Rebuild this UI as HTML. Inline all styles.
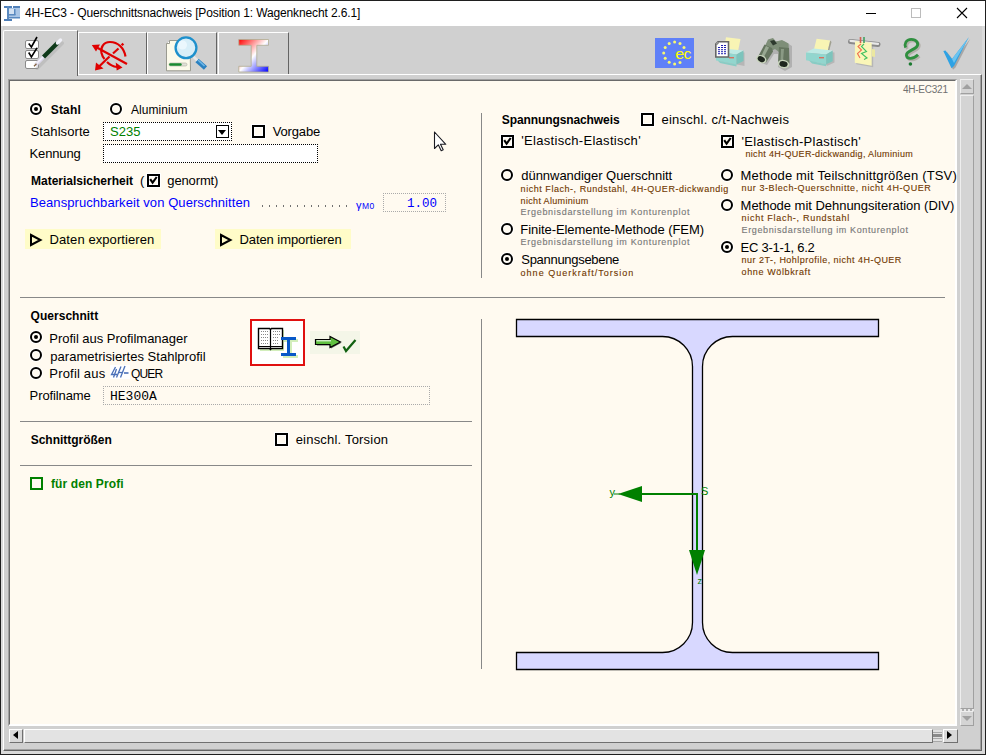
<!DOCTYPE html>
<html><head><meta charset="utf-8">
<style>
*{margin:0;padding:0;box-sizing:border-box}
html,body{width:986px;height:755px;overflow:hidden;background:#d0d0d0;font-family:"Liberation Sans",sans-serif;color:#000}
.a{position:absolute}
.t{position:absolute;white-space:nowrap;line-height:1}
.f13{font-size:13px}
.f12{font-size:12px}
.f10{font-size:10px}
.b{font-weight:bold}
.rad{position:absolute;width:12px;height:12px;border:2px solid #000;border-radius:50%;box-shadow:0 0 0 1px #fff,inset 0 0 0 1px #fff}
.rad.on::after{content:"";position:absolute;left:2px;top:2px;width:4px;height:4px;background:#000;border-radius:50%}
.chk{position:absolute;width:13px;height:13px;border:2px solid #000;box-shadow:0 0 0 1px #fff,inset 0 0 0 1px #fff}
.brn{color:#8a4a00}
.gry{color:#888}
</style></head><body>
<!-- window frame -->
<div class="a" style="left:0;top:0;width:986px;height:26px;background:#fff"></div>
<div class="a" style="left:0;top:0;width:986px;height:1px;background:#1f1f1f"></div>
<div class="a" style="left:0;top:0;width:1px;height:755px;background:#1f1f1f"></div>
<div class="a" style="left:985px;top:0;width:1px;height:755px;background:#1f1f1f"></div>
<div class="a" style="left:0;top:754px;width:986px;height:1px;background:#1f1f1f"></div>
<!-- title -->
<div class="t f12" style="left:25px;top:7px;letter-spacing:-0.13px;color:#000">4H-EC3 - Querschnittsnachweis [Position 1: Wagenknecht 2.6.1]</div>
<!-- outer light band -->
<div class="a" style="left:1px;top:26px;width:2px;height:728px;background:#dadada"></div>
<div class="a" style="left:982px;top:26px;width:3px;height:728px;background:#dadada"></div>
<div class="a" style="left:1px;top:751px;width:984px;height:3px;background:#dadada"></div>
<!-- tab panel frame -->
<div class="a" style="left:3px;top:74px;width:979px;height:677px;border-left:1px solid #fff;border-top:1px solid #fff;border-right:1px solid #646464;border-bottom:1px solid #646464"></div>
<div class="a" style="left:980px;top:75px;width:1px;height:675px;background:#a0a0a0"></div>
<div class="a" style="left:4px;top:749px;width:977px;height:1px;background:#a0a0a0"></div>
<!-- tabs -->
<div class="a" style="left:78px;top:32px;width:69px;height:43px;background:#d0d0d0;border-top:1px solid #fff;border-left:1px solid #fff;border-right:1px solid #646464"></div>
<div class="a" style="left:147px;top:32px;width:70px;height:43px;background:#d0d0d0;border-top:1px solid #fff;border-left:1px solid #fff;border-right:1px solid #646464"></div>
<div class="a" style="left:218px;top:32px;width:71px;height:43px;background:#d0d0d0;border-top:1px solid #fff;border-left:1px solid #fff;border-right:1px solid #646464"></div>
<div class="a" style="left:78px;top:74px;width:211px;height:1px;background:#fff"></div>
<!-- active tab -->
<div class="a" style="left:3px;top:30px;width:75px;height:46px;background:#d0d0d0;border-top:1px solid #fff;border-left:1px solid #fff;border-right:1px solid #646464;border-top-left-radius:2px"></div>
<!-- cream panel -->
<div class="a" style="left:8px;top:79px;width:949px;height:647px;background:#fffaf0;border-left:2px solid #6a6a6a;border-top:2px solid #6a6a6a;border-right:2px solid #fff;border-bottom:2px solid #fff"></div>
<div class="a" style="left:8px;top:79px;width:1px;height:646px;background:#a0a0a0"></div>
<div class="a" style="left:8px;top:79px;width:948px;height:1px;background:#a0a0a0"></div>
<!-- v scroll -->
<div class="a" style="left:960px;top:79px;width:14px;height:15px;background:#d4d4d4;border-left:1px solid #eee;border-top:1px solid #eee;border-right:1px solid #a0a0a0;border-bottom:1px solid #a0a0a0"></div>
<div class="a" style="left:962px;top:84px;width:0;height:0;border-left:5px solid transparent;border-right:5px solid transparent;border-bottom:5px solid #a0a0a0"></div>
<div class="a" style="left:960px;top:95px;width:14px;height:614px;background:#d4d4d4;border-left:1px solid #eee;border-top:1px solid #eee;border-right:1px solid #a0a0a0;border-bottom:1px solid #a0a0a0"></div>
<div class="a" style="left:960px;top:709px;width:14px;height:2px;background:repeating-linear-gradient(90deg,#e8e8e8 0 2px,#b0b0b0 2px 4px)"></div>
<div class="a" style="left:960px;top:711px;width:14px;height:15px;background:#d4d4d4;border-left:1px solid #eee;border-top:1px solid #eee;border-right:1px solid #a0a0a0;border-bottom:1px solid #a0a0a0"></div>
<div class="a" style="left:962px;top:716px;width:0;height:0;border-left:5px solid transparent;border-right:5px solid transparent;border-top:5px solid #a0a0a0"></div>
<!-- h scroll -->
<div class="a" style="left:9px;top:729px;width:14px;height:14px;background:#d8d8d8;border-left:1px solid #fff;border-top:1px solid #fff;border-right:1px solid #707070;border-bottom:1px solid #707070"></div>
<div class="a" style="left:13px;top:731px;width:0;height:0;border-top:4.5px solid transparent;border-bottom:4.5px solid transparent;border-right:5px solid #000"></div>
<div class="a" style="left:24px;top:729px;width:909px;height:14px;background:#e3e3e3;border-left:1px solid #fff;border-top:1px solid #fff;border-right:1px solid #707070;border-bottom:1px solid #707070"></div>
<div class="a" style="left:933px;top:730px;width:9px;height:12px;background:repeating-linear-gradient(180deg,#e0e0e0 0 2px,#a8a8a8 2px 3px)"></div>
<div class="a" style="left:933px;top:734px;width:9px;height:3px;background:#8a8a8a"></div>
<div class="a" style="left:943px;top:729px;width:15px;height:14px;background:#d8d8d8;border-left:1px solid #fff;border-top:1px solid #fff;border-right:1px solid #707070;border-bottom:1px solid #707070"></div>
<div class="a" style="left:947px;top:731px;width:0;height:0;border-top:4.5px solid transparent;border-bottom:4.5px solid transparent;border-left:5px solid #000"></div>
<!-- left top form controls -->
<div class="rad on" style="left:30px;top:103px"></div>
<div class="rad" style="left:110px;top:103px"></div>
<div class="a" style="left:103px;top:122px;width:129px;height:19px;background:#fff;border:1px dotted #000"></div>
<div class="t f13" style="left:110px;top:125px;color:#008000">S235</div>
<div class="a" style="left:216px;top:125px;width:13px;height:13px;border:1px solid #000;background:#fff"></div>
<div class="a" style="left:218px;top:130px;width:0;height:0;border-left:4.5px solid transparent;border-right:4.5px solid transparent;border-top:5px solid #000"></div>
<div class="chk" style="left:252px;top:125px"></div>
<div class="a" style="left:103px;top:144px;width:215px;height:19px;background:#fff;border:1px dotted #000"></div>
<div class="t f13" style="left:140px;top:174px">(</div>
<div class="chk" style="left:147px;top:174px"></div>
<svg class="a" style="left:147px;top:174px" width="13" height="13"><path d="M3.2 5.2 L5.6 8.6 L9.7 3" stroke="#000" stroke-width="2.1" fill="none"/></svg>
<div class="a" style="left:262px;top:205px;width:85px;height:2px;background:repeating-linear-gradient(90deg,#707070 0 1px,transparent 1px 7px)"></div>
<div class="t" style="left:356px;top:200px;font-size:11px;color:#0000ff">&#947;</div><div class="t" style="left:362px;top:202px;font-size:8.5px;color:#0000ff;letter-spacing:.3px">M0</div>
<div class="a" style="left:383px;top:193px;width:63px;height:19px;border:1px dotted #aaa"></div>
<div class="t" style="left:407px;top:198px;font-size:12.5px;font-family:'Liberation Mono',monospace;color:#0000ff">1.00</div>
<div class="a" style="left:25px;top:229px;width:136px;height:20px;background:#fffcc8"></div>
<svg class="a" style="left:29px;top:233px" width="14" height="14"><path d="M2 2 L11.5 7 L2 12 Z" stroke="#000" stroke-width="2" fill="none"/></svg>
<div class="a" style="left:215px;top:229px;width:136px;height:20px;background:#fffcc8"></div>
<svg class="a" style="left:219px;top:233px" width="14" height="14"><path d="M2 2 L11.5 7 L2 12 Z" stroke="#000" stroke-width="2" fill="none"/></svg>
<!-- right top controls -->
<div class="a" style="left:481px;top:113px;width:1px;height:165px;background:#888"></div>
<div class="a" style="left:903px;top:85px;font-size:10px;letter-spacing:-.25px;color:#707070;line-height:1;white-space:nowrap">4H-EC321</div>
<div class="chk" style="left:641px;top:113px"></div>
<div class="chk" style="left:501px;top:135px"></div>
<svg class="a" style="left:501px;top:135px" width="13" height="13"><path d="M3.2 5.2 L5.6 8.6 L9.7 3" stroke="#000" stroke-width="2.1" fill="none"/></svg>
<div class="chk" style="left:721px;top:135px"></div>
<svg class="a" style="left:721px;top:135px" width="13" height="13"><path d="M3.2 5.2 L5.6 8.6 L9.7 3" stroke="#000" stroke-width="2.1" fill="none"/></svg>
<div class="rad" style="left:501px;top:169px"></div>
<div class="rad" style="left:501px;top:223px"></div>
<div class="rad on" style="left:501px;top:253px"></div>
<div class="rad" style="left:721px;top:169px"></div>
<div class="rad" style="left:721px;top:199px"></div>
<div class="rad on" style="left:721px;top:241px"></div>
<!-- separators -->
<div class="a" style="left:20px;top:297px;width:925px;height:1px;background:#888"></div>
<div class="a" style="left:20px;top:421px;width:452px;height:1px;background:#888"></div>
<div class="a" style="left:20px;top:465px;width:452px;height:1px;background:#888"></div>
<div class="a" style="left:481px;top:319px;width:1px;height:350px;background:#888"></div>
<!-- lower left controls -->
<div class="rad on" style="left:30px;top:331px"></div>
<div class="rad" style="left:30px;top:349px"></div>
<div class="rad" style="left:30px;top:367px"></div>
<div class="a" style="left:103px;top:386px;width:327px;height:19px;border:1px dotted #aaa"></div>
<div class="t f13" style="left:110px;top:390px;font-family:'Liberation Mono',monospace">HE300A</div>
<div class="chk" style="left:275px;top:433px"></div>
<div class="a" style="left:30px;top:477px;width:13px;height:13px;border:2px solid #008000"></div>
<div class="t" style="left:50.7px;top:104px;font-size:12px;font-weight:bold;letter-spacing:0.2px;">Stahl</div>
<div class="t" style="left:131.0px;top:104px;font-size:12px;letter-spacing:0.062px;">Aluminium</div>
<div class="t" style="left:30.6px;top:125px;font-size:13px;letter-spacing:0.078px;">Stahlsorte</div>
<div class="t" style="left:272.7px;top:125px;font-size:13px;letter-spacing:-0.15px;">Vorgabe</div>
<div class="t" style="left:29.6px;top:147px;font-size:13px;letter-spacing:-0.15px;">Kennung</div>
<div class="t" style="left:31.0px;top:175px;font-size:12px;font-weight:bold;">Materialsicherheit</div>
<div class="t" style="left:167.3px;top:174px;font-size:13px;letter-spacing:-0.129px;">genormt)</div>
<div class="t" style="left:30.0px;top:196px;font-size:13px;color:#0000ff;letter-spacing:0.071px;">Beanspruchbarkeit von Querschnitten</div>
<div class="t" style="left:49.6px;top:233px;font-size:13px;letter-spacing:0.081px;">Daten exportieren</div>
<div class="t" style="left:239.4px;top:233px;font-size:13px;letter-spacing:-0.063px;">Daten importieren</div>
<div class="t" style="left:501.8px;top:114px;font-size:12px;font-weight:bold;letter-spacing:-0.1px;">Spannungsnachweis</div>
<div class="t" style="left:661.4px;top:113px;font-size:13px;letter-spacing:0.27px;">einschl. c/t-Nachweis</div>
<div class="t" style="left:521.3px;top:134px;font-size:13px;letter-spacing:0.3px;">'Elastisch-Elastisch'</div>
<div class="t" style="left:521.3px;top:169px;font-size:13px;letter-spacing:-0.039px;">dünnwandiger Querschnitt</div>
<div class="t" style="left:520.6px;top:185px;font-size:9px;color:#703800;letter-spacing:0.54px;-webkit-text-stroke:.12px;">nicht Flach-, Rundstahl, 4H-QUER-dickwandig</div>
<div class="t" style="left:520.6px;top:197px;font-size:9px;color:#703800;letter-spacing:0.329px;-webkit-text-stroke:.12px;">nicht Aluminium</div>
<div class="t" style="left:520.6px;top:208px;font-size:9px;color:#787878;letter-spacing:0.697px;-webkit-text-stroke:.12px;">Ergebnisdarstellung im Konturenplot</div>
<div class="t" style="left:520.3px;top:223px;font-size:13px;letter-spacing:-0.068px;">Finite-Elemente-Methode (FEM)</div>
<div class="t" style="left:520.6px;top:238px;font-size:9px;color:#787878;letter-spacing:0.697px;-webkit-text-stroke:.12px;">Ergebnisdarstellung im Konturenplot</div>
<div class="t" style="left:521.3px;top:253px;font-size:13px;letter-spacing:-0.3px;">Spannungsebene</div>
<div class="t" style="left:520.6px;top:269px;font-size:9px;color:#703800;letter-spacing:1.01px;-webkit-text-stroke:.12px;">ohne Querkraft/Torsion</div>
<div class="t" style="left:741.6px;top:135px;font-size:13px;letter-spacing:0.285px;">'Elastisch-Plastisch'</div>
<div class="t" style="left:745.4px;top:150px;font-size:9px;color:#703800;letter-spacing:0.332px;-webkit-text-stroke:.12px;">nicht 4H-QUER-dickwandig, Aluminium</div>
<div class="t" style="left:740.6px;top:169px;font-size:13px;letter-spacing:0.159px;">Methode mit Teilschnittgrößen (TSV)</div>
<div class="t" style="left:741.6px;top:184px;font-size:9px;color:#703800;letter-spacing:0.584px;-webkit-text-stroke:.12px;">nur 3-Blech-Querschnitte, nicht 4H-QUER</div>
<div class="t" style="left:740.6px;top:199px;font-size:13px;letter-spacing:-0.026px;">Methode mit Dehnungsiteration (DIV)</div>
<div class="t" style="left:741.6px;top:214px;font-size:9px;color:#703800;letter-spacing:0.705px;-webkit-text-stroke:.12px;">nicht Flach-, Rundstahl</div>
<div class="t" style="left:741.6px;top:226px;font-size:9px;color:#787878;letter-spacing:0.626px;-webkit-text-stroke:.12px;">Ergebnisdarstellung im Konturenplot</div>
<div class="t" style="left:740.6px;top:241px;font-size:13px;letter-spacing:-0.258px;">EC 3-1-1, 6.2</div>
<div class="t" style="left:741.6px;top:256px;font-size:9px;color:#703800;letter-spacing:0.476px;-webkit-text-stroke:.12px;">nur 2T-, Hohlprofile, nicht 4H-QUER</div>
<div class="t" style="left:741.6px;top:268px;font-size:9px;color:#703800;letter-spacing:0.623px;-webkit-text-stroke:.12px;">ohne Wölbkraft</div>
<div class="t" style="left:30.6px;top:310px;font-size:12px;font-weight:bold;letter-spacing:0.02px;">Querschnitt</div>
<div class="t" style="left:49.3px;top:332px;font-size:13px;letter-spacing:-0.022px;">Profil aus Profilmanager</div>
<div class="t" style="left:50.3px;top:350px;font-size:13px;letter-spacing:0.026px;">parametrisiertes Stahlprofil</div>
<div class="t" style="left:49.3px;top:367px;font-size:13px;letter-spacing:0.189px;">Profil aus</div>
<div class="t" style="left:130.9px;top:368px;font-size:12px;letter-spacing:-0.8px;">QUER</div>
<div class="t" style="left:29.6px;top:389px;font-size:13px;letter-spacing:-0.1px;">Profilname</div>
<div class="t" style="left:30.7px;top:434px;font-size:12px;font-weight:bold;letter-spacing:-0.017px;">Schnittgrößen</div>
<div class="t" style="left:295.7px;top:433px;font-size:13px;letter-spacing:0.2px;">einschl. Torsion</div>
<div class="t" style="left:51.0px;top:478px;font-size:12px;font-weight:bold;color:#008000;letter-spacing:0.108px;">für den Profi</div>
<!-- title icon -->
<svg class="a" style="left:0;top:0" width="24" height="26">
<rect x="9" y="8" width="11" height="10" fill="#aac6e6"/>
<rect x="9" y="9" width="6" height="5" fill="#d4e2f2"/>
<rect x="14" y="9" width="1.5" height="6" fill="#5b8ac0"/>
<rect x="9" y="14" width="6.5" height="1.5" fill="#5b8ac0"/>
<rect x="4" y="6" width="8" height="2" fill="#4f7fb8"/>
<rect x="13" y="6" width="7" height="2" fill="#4f7fb8"/>
<rect x="7" y="6" width="2" height="15" fill="#5b8ac0"/>
<rect x="4" y="19" width="8" height="2" fill="#4f7fb8"/>
<rect x="9" y="17" width="11" height="1.5" fill="#5b8ac0"/>
</svg>
<!-- window buttons -->
<div class="a" style="left:866px;top:13px;width:10px;height:1px;background:#000"></div>
<div class="a" style="left:911px;top:8px;width:10px;height:10px;border:1px solid #bcbcbc"></div>
<svg class="a" style="left:955px;top:6px" width="14" height="14"><path d="M2 2 L12 12 M12 2 L2 12" stroke="#000" stroke-width="1.1"/></svg>
<!-- tab1 icon: checklist + pen -->
<svg class="a" style="left:20px;top:34px" width="46" height="40">
<g fill="#fff" stroke="#8a8a8a" stroke-width="1">
<rect x="5.5" y="6.5" width="13" height="8" rx="1.5"/>
<rect x="5.5" y="16.5" width="13" height="8" rx="1.5"/>
<rect x="5.5" y="26.5" width="13" height="8" rx="1.5"/>
</g>
<path d="M8.7 9.5 L11.4 13 L17 3" stroke="#000" stroke-width="1.6" fill="none"/>
<path d="M8.7 18.5 L11.4 23 L17 13.8" stroke="#000" stroke-width="1.6" fill="none"/>
<path d="M16 33 L41 8" stroke="#a0a0a0" stroke-width="3.5" stroke-linecap="round" opacity=".35" transform="translate(1.2,1.2)"/>
<path d="M15.5 31 L24 22.5" stroke="#dcd8ec" stroke-width="3.6"/>
<path d="M16 30 L23.5 22.5" stroke="#f4f2fa" stroke-width="1.4"/>
<path d="M23.5 23 L37.5 9" stroke="#0e3a1a" stroke-width="4.3"/>
<path d="M37.5 9 L40.5 6" stroke="#f0f0f8" stroke-width="3.4" stroke-linecap="round"/>
<path d="M14 32.3 L16.5 29.8" stroke="#806040" stroke-width="1.3"/>
</svg>
<!-- tab2 icon: red arrows -->
<svg class="a" style="left:86px;top:34px" width="50" height="40" fill="none" stroke="#e00000" stroke-width="2.2">
<path d="M41 30 L9 12.5"/>
<path d="M5.8 11 L14 10.5 L10 17.5 Z" fill="#e00000" stroke="none"/>
<path d="M32.5 14.5 L27 19.5"/>
<path d="M23.5 22.5 L12 33.5"/>
<path d="M9 36.5 L10 28.5 L17.5 34.5 Z" fill="#e00000" stroke="none"/>
<rect x="35.3" y="9.2" width="2.4" height="2.4" fill="#e00000" stroke="none" transform="rotate(45 36.5 10.4)"/>
<path d="M39.5 22.5 C38 14 32 8 24 8 C17 8 14.5 14 15.5 19 C16.2 22 17.5 24 18.5 25"/>
<path d="M21 28 C24 31 27 32.5 31 33"/>
<path d="M29.7 28.6 L36.5 33.4 L30.7 36.5 Z" fill="#e00000" stroke="none"/>
</svg>
<!-- tab3 icon: document + magnifier -->
<svg class="a" style="left:160px;top:34px" width="50" height="40">
<path d="M9.5 6.5 L30 6.5 L30.5 36.8 L6.5 36.8 L6.5 9.5 Z" fill="#fcfaea" stroke="#9a9a90" stroke-width="1"/>
<path d="M6.5 9.5 L9.5 9.5 L9.5 6.5" fill="#fff" stroke="#9a9a90" stroke-width="1"/>
<rect x="9" y="29" width="18" height="3" rx="1.5" fill="#e0e0d8" stroke="#b0b0a0" stroke-width=".6"/>
<rect x="9.2" y="29.3" width="12.5" height="2.4" rx="1.2" fill="#1a8a30"/>
<path d="M37 26.5 L45.5 34" stroke="#2a80c0" stroke-width="4.8" stroke-linecap="butt"/>
<path d="M38 26 L44.5 32" stroke="#70b8e8" stroke-width="1.6"/>
<path d="M33.5 22.8 L37.2 26.3" stroke="#e8e8e8" stroke-width="2.6"/>
<circle cx="26" cy="13.8" r="10.4" fill="#d8eef8" stroke="#1e90cc" stroke-width="2.3"/>
<circle cx="22.5" cy="11" r="4.5" fill="#f4fbff" opacity=".7"/>
</svg>
<!-- tab4 icon: gradient I-beam -->
<svg class="a" style="left:230px;top:34px" width="50" height="40">
<defs><linearGradient id="ig" x1="0" y1="0" x2="1" y2="1"><stop offset="0" stop-color="#ff0000"/><stop offset=".5" stop-color="#ffffff"/><stop offset="1" stop-color="#0000ff"/></linearGradient></defs>
<path d="M8.8 5.5 L38.5 5.5 L38.5 11.3 L26.8 11.3 L26.8 32.3 L38.5 32.3 L38.5 38 L8.8 38 L8.8 32.3 L21.2 32.3 L21.2 11.3 L8.8 11.3 Z" fill="url(#ig)" stroke="#b0ac90" stroke-width=".8"/>
</svg>
<!-- toolbar: EC flag -->
<svg class="a" style="left:654px;top:37px" width="42" height="32">
<rect x="1" y="1" width="39" height="30" fill="#5f80f8"/>
<g fill="#f8f870">
<circle cx="20.6" cy="5" r="1.5"/><circle cx="15.2" cy="6.4" r="1.5"/><circle cx="26" cy="6.4" r="1.5"/>
<circle cx="11.2" cy="10.5" r="1.5"/><circle cx="30" cy="10.5" r="1.5"/><circle cx="9.7" cy="16" r="1.5"/>
<circle cx="11.2" cy="21.3" r="1.5"/><circle cx="15.2" cy="25.3" r="1.5"/><circle cx="20.6" cy="27" r="1.5"/><circle cx="26" cy="25.5" r="1.5"/>
</g>
<text x="21.3" y="21.5" font-family="Liberation Sans" font-size="14.5" fill="#ffff00" letter-spacing="-0.6" textLength="15.5" lengthAdjust="spacingAndGlyphs">ec</text>
</svg>
<!-- printer with document -->
<svg class="a" style="left:710px;top:34px" width="40" height="38">
<path d="M6.5 25.5 L33 30.5 L33 17 L6.5 13.5 Z" fill="#000" opacity=".12" transform="translate(1.5,1.5)"/>
<path d="M16 3.2 L30.5 5 L28 17.5 L14 15.5 Z" fill="#f8f4b4"/>
<path d="M6 17.5 L13 14.5 L33.5 16.5 L26.5 20.5 Z" fill="#bfeae4"/>
<path d="M6 17.5 L26.5 20.5 L26.5 30.5 L6 26.5 Z" fill="#92d6ce"/>
<path d="M26.5 20.5 L33.5 16.5 L33.5 27 L26.5 30.5 Z" fill="#7cc4bc"/>
<path d="M8 26.8 L26.5 30.5 L26.5 32.5 L10 29 Z" fill="#88ccc4"/>
<rect x="19" y="23" width="5" height="1.4" fill="#d87060"/>
<path d="M8 7.8 L18.5 7.8 L18.5 23 L5.8 23 L5.8 10 Z" fill="#fff" stroke="#666" stroke-width="1.6"/><path d="M5.8 10 L8 10 L8 7.8" fill="#eee" stroke="#666" stroke-width="1"/>
<g fill="#2020b0"><rect x="11" y="11" width="2" height="1"/><rect x="14" y="11" width="2" height="1"/>
<rect x="8" y="13" width="2" height="1"/><rect x="11" y="13" width="2" height="1"/><rect x="14" y="13" width="2" height="1"/>
<rect x="8" y="15.2" width="2" height="1"/><rect x="11" y="15.2" width="2" height="1"/><rect x="14" y="15.2" width="2" height="1"/>
<rect x="8" y="17.2" width="2" height="1"/><rect x="11" y="17.2" width="2" height="1"/><rect x="14" y="17.2" width="2" height="1"/>
<rect x="8" y="19.2" width="2" height="1"/><rect x="11" y="19.2" width="2" height="1"/><rect x="14" y="19.2" width="2" height="1"/></g>
</svg>
<!-- binoculars -->
<svg class="a" style="left:752px;top:34px" width="44" height="38">
<g opacity=".15" transform="translate(2,2)"><path d="M15 5 L30 5 L38 10 L38 31 L31 35 L24 31 L24 18 L20 18 L13 29 L5 26 Z"/></g>
<path d="M16 5.5 L21 4 L24 7.5 L30 6 L36.5 9.5 L37 17 L27 18 L23 15 L19 17 L12 14 Z" fill="#7e8e78"/>
<path d="M12.5 10.5 L20 14 L21 17.5 L14 28.5 L5 24.5 Z" fill="#65755f"/>
<path d="M27 13 L37 14 L37.5 29.5 L26 29.5 Z" fill="#65755f"/>
<path d="M14 12 L17 13.5 L10.5 25.5 L8 24.5 Z" fill="#98a892"/>
<path d="M29 15 L32 15 L31 27 L28.5 27 Z" fill="#8a9a84"/>
<ellipse cx="9.3" cy="25.2" rx="5.3" ry="4" fill="#c8d4bc" transform="rotate(25 9.3 25.2)"/>
<ellipse cx="9.3" cy="25.2" rx="3.8" ry="2.7" fill="#1e261e" transform="rotate(25 9.3 25.2)"/>
<ellipse cx="31.5" cy="30" rx="5.8" ry="4.2" fill="#c8d4bc" transform="rotate(12 31.5 30)"/>
<ellipse cx="31.5" cy="30" rx="4.2" ry="2.9" fill="#1e261e" transform="rotate(12 31.5 30)"/>
<path d="M18 7 L22 6 L25 9.5 L21 11.5 Z" fill="#2e3a2e"/>
</svg>
<!-- printer -->
<svg class="a" style="left:800px;top:34px" width="40" height="38">
<path d="M6 18.6 L26 30.2 L33 27 L33 17 L13 14.6 Z" fill="#000" opacity=".12" transform="translate(1.5,1.5)"/>
<path d="M16.6 4.8 L30.2 6.5 L27.7 17.1 L14.1 15.1 Z" fill="#f8f4b4"/>
<path d="M30.2 6.5 L31.5 8 L29 17.5 L27.7 17.1 Z" fill="#a0a090"/>
<path d="M6 18.6 L13.6 14.6 L32.7 16.6 L26.2 20.6 Z" fill="#bfeae4"/>
<path d="M6 18.6 L26.2 20.6 L26.2 30.2 L6 26.2 Z" fill="#92d6ce"/>
<path d="M26.2 20.6 L32.7 16.6 L32.7 27.2 L26.2 30.2 Z" fill="#7cc4bc"/>
<path d="M9 26.5 L26.2 30.2 L26.2 32.2 L12 29.5 Z" fill="#88ccc4"/>
<rect x="19" y="23" width="5" height="1.4" fill="#d87060"/>
</svg>
<!-- chart roll -->
<svg class="a" style="left:845px;top:32px" width="40" height="38">
<path d="M10 9.3 L26.7 10.8 L26.7 33.7 L9.8 30.7 Z" fill="#000" opacity=".12" transform="translate(1.5,1.5)"/>
<path d="M27 17 L30 17.5 L30 25 L27 24.5 Z" fill="#ece8a0"/>
<path d="M5.5 9.6 L33 12.6" stroke="#8a8a8a" stroke-width="5" stroke-linecap="round"/>
<path d="M5.5 8.8 L33 11.8" stroke="#e8e8e8" stroke-width="2.2" stroke-linecap="round"/>
<path d="M10 9.3 L26.7 10.8 L26.7 33.7 L9.8 30.7 Z" fill="#faf6b8"/>
<path d="M15.5 5 L15.5 11" stroke="#d06050" stroke-width="1.6"/>
<path d="M19 5 L19 11" stroke="#40a060" stroke-width="1.6"/>
<path d="M16 12 L13 14.5 L16.5 18 L12.5 21.5 L15 26" stroke="#f07050" stroke-width="1.1" fill="none"/>
<path d="M19 12 L16.5 14.5 L21.5 19.5 L16.5 21.5 L22 26 L19 27.5" stroke="#40c060" stroke-width="1.1" fill="none"/>
</svg>
<!-- help ? -->
<svg class="a" style="left:895px;top:32px" width="32" height="40">
<path d="M10.7 15.6 C9 12 11 7.3 16.2 7.3 C21.5 7.3 24.5 11.5 21.5 15 C19 18 11 19 11.4 23.4 C11.8 27.5 18 27.5 23 22.7" stroke="#8a8070" stroke-width="2.8" fill="none" opacity=".4" transform="translate(1.5,1.5)"/>
<path d="M10.7 15.6 C9 12 11 7.3 16.2 7.3 C21.5 7.3 24.5 11.5 21.5 15 C19 18 11 19 11.4 23.4 C11.8 27.5 18 27.5 23 22.7" stroke="#2f8f3f" stroke-width="2.8" fill="none"/>
<circle cx="15.4" cy="32" r="1.8" fill="#1a7a30"/>
</svg>
<!-- checkmark -->
<svg class="a" style="left:935px;top:32px" width="45" height="42">
<path d="M8.3 19 L10.5 18.5 L17 27 L33.8 5.3 L19 34 L16.5 36.2 Z" fill="#000" opacity=".2" transform="translate(1.5,1.5)"/>
<path d="M8.3 19 L10.5 18.5 L17 27 L33.8 5.3 L19 34 L16.5 36.2 Z" fill="#2ea2e4"/>
<path d="M17 27 L33.8 5.3 L19 31 Z" fill="#6cc4f0"/>
</svg>
<!-- cursor -->
<svg class="a" style="left:430px;top:128px" width="20" height="26">
<path d="M4.5 4 L4.5 20.5 L8.3 16.8 L11.2 22.8 L13.2 21.8 L10.5 16.3 L15.8 16.3 Z" fill="#fff" stroke="#1a1a22" stroke-width="1.1" stroke-linejoin="round"/>
</svg>
<!-- I-beam drawing -->
<svg class="a" style="left:0;top:0" width="986" height="755">
<path d="M516.5 319.5 H878.5 V336.5 H732.5 A30 30 0 0 0 702.5 366.5 V622.5 A30 30 0 0 0 732.5 652.5 H878.5 V669.5 H516.5 V652.5 H662.5 A30 30 0 0 0 692.5 622.5 V366.5 A30 30 0 0 0 662.5 336.5 H516.5 Z" fill="#d8d8ff" stroke="#000" stroke-width="1.3"/>
<g stroke="#008000" stroke-width="2" fill="none">
<path d="M642 494 H697 V550"/><path d="M614 494 H620" stroke-width="1"/>
</g>
<path d="M618 494 L642 486 L642 502 Z" fill="#008000"/>
<path d="M697 575 L689 550 L705 550 Z" fill="#008000"/>
<text x="609.5" y="495.5" font-family="Liberation Sans" font-size="11" fill="#008000">y</text>
<text x="701" y="494.5" font-family="Liberation Sans" font-size="11" fill="#008000">S</text>
<text x="697.5" y="583.5" font-family="Liberation Sans" font-size="9" fill="#008000">z</text>
</svg>
<!-- book + I icon -->
<div class="a" style="left:250px;top:319px;width:55px;height:47px;background:#fff;border:2px solid #e01010"></div>
<svg class="a" style="left:250px;top:319px" width="55" height="47">
<g transform="translate(1,1)" fill="#80d040" opacity=".35"><rect x="9" y="10" width="24" height="21"/><rect x="32" y="19" width="15" height="3"/><rect x="38" y="21" width="3" height="14"/><rect x="32" y="35" width="15" height="3"/></g>
<path d="M8.5 9.5 H19.5 L20.5 10.5 L21.5 9.5 H32.5 V29.5 H21.5 L20.5 30.5 L19.5 29.5 H8.5 Z" fill="#fff" stroke="#000" stroke-width="1.4"/>
<path d="M8.5 27.5 H32.5" stroke="#000" stroke-width="1"/>
<path d="M20.5 10.5 V30" stroke="#000" stroke-width="1.2"/>
<g fill="#888">
<rect x="11" y="12" width="1" height="1"/><rect x="13" y="12" width="1" height="1"/><rect x="15" y="12" width="1" height="1"/><rect x="17" y="12" width="1" height="1"/>
<rect x="11" y="15" width="1" height="1"/><rect x="13" y="15" width="1" height="1"/><rect x="15" y="15" width="1" height="1"/><rect x="17" y="15" width="1" height="1"/>
<rect x="11" y="18" width="1" height="1"/><rect x="13" y="18" width="1" height="1"/><rect x="15" y="18" width="1" height="1"/><rect x="17" y="18" width="1" height="1"/>
<rect x="11" y="21" width="1" height="1"/><rect x="13" y="21" width="1" height="1"/><rect x="15" y="21" width="1" height="1"/><rect x="17" y="21" width="1" height="1"/>
<rect x="11" y="24" width="1" height="1"/><rect x="13" y="24" width="1" height="1"/><rect x="15" y="24" width="1" height="1"/><rect x="17" y="24" width="1" height="1"/>
<rect x="23" y="12" width="1" height="1"/><rect x="25" y="12" width="1" height="1"/><rect x="27" y="12" width="1" height="1"/><rect x="29" y="12" width="1" height="1"/>
<rect x="23" y="15" width="1" height="1"/><rect x="25" y="15" width="1" height="1"/><rect x="27" y="15" width="1" height="1"/><rect x="29" y="15" width="1" height="1"/>
<rect x="23" y="18" width="1" height="1"/><rect x="25" y="18" width="1" height="1"/><rect x="27" y="18" width="1" height="1"/>
<rect x="23" y="21" width="1" height="1"/><rect x="25" y="21" width="1" height="1"/><rect x="27" y="21" width="1" height="1"/>
<rect x="23" y="24" width="1" height="1"/><rect x="25" y="24" width="1" height="1"/><rect x="27" y="24" width="1" height="1"/>
</g>
<rect x="31" y="18" width="15" height="3" fill="#0858c8"/>
<rect x="37" y="20" width="3" height="15" fill="#0858c8"/>
<rect x="31" y="34" width="15" height="3" fill="#0858c8"/>
</svg>
<!-- arrow + check -->
<div class="a" style="left:310px;top:331px;width:50px;height:23px;background:#f4f6e8"></div>
<svg class="a" style="left:305px;top:325px" width="60" height="40">
<g transform="translate(0,1.5)">
<path d="M11 13.5 H25 V10.5 L35 15.5 L25 21 V18 H11 Z" fill="#000" opacity=".6" transform="translate(1,1)"/>
<path d="M10.5 13 H25 V10 L35.5 15.5 L25 21 V18 H10.5 Z" fill="#60c040" stroke="#000" stroke-width="1.2"/>
<path d="M11.5 14.3 H26" stroke="#fff" stroke-width="1"/>
</g>
<path d="M38.5 21.5 L41 26 L50.5 15" stroke="#106010" stroke-width="2.2" fill="none"/>
</svg>
<!-- 4H logo -->
<div class="a" style="left:110px;top:365px;width:20px;height:14px;background:#fff"></div>
<svg class="a" style="left:110px;top:365px" width="20" height="14">
<g stroke="#4a70b8" stroke-width="1.3" fill="none">
<path d="M5.5 2 L1.5 9.5 H7"/><path d="M6.5 4 L3.5 12.5"/>
<path d="M11 1.5 L6.5 12.5"/><path d="M15 1 L10.5 12.5"/><path d="M8 7.5 H13"/><path d="M14 8 H18.5" stroke-width="1.6"/>
</g>
</svg>
</body></html>
